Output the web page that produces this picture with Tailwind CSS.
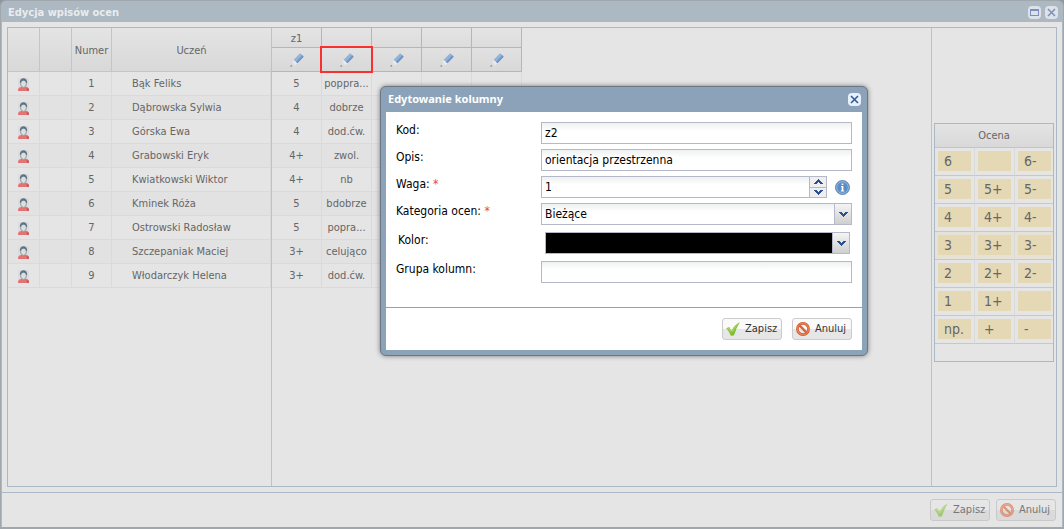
<!DOCTYPE html>
<html lang="pl">
<head>
    <meta charset="UTF-8">
    <meta name="viewport" content="width=device-width, initial-scale=1.0">
    <title>Edycja wpisów ocen</title>
    <script src="https://cdn.jsdelivr.net/npm/@tailwindcss/browser@4"></script>
    <style>
        body {
            font-family: 'DejaVu Sans Condensed', 'Noto Sans', sans-serif;
        }
        .title {
            font-family: 'Noto Sans', sans-serif;
        }
    </style>
</head>
<body class="bg-[#8f979e] text-[11px] text-[#666]">

    <!-- Icons -->
    <svg class="hidden" xmlns="http://www.w3.org/2000/svg">
        <symbol id="i-person" viewBox="0 0 12 13">
            <rect width="11" height="13" fill="#dcdcdc"/>
            <path d="M0 13V11.2Q.6 9.6 3 9H8Q10.4 9.6 11 11.2V13Z" fill="#e27474"/>
            <path d="M8.4 9.2Q10.4 9.8 11 11.2V13H9.2Z" fill="#c25a62"/>
            <ellipse cx="5.5" cy="5.8" rx="2.9" ry="3.6" fill="#dedede" stroke="#8c8c8c" stroke-width=".8"/>
            <path d="M1.8 5Q1.8 0.2 5.5 0.2T9.2 5L8.2 4.8Q8 2.6 5.5 2.6T2.8 4.8Z" fill="#5b7488"/>
        </symbol>
        <symbol id="i-pencil" viewBox="0 0 14 14">
            <path d="M0.6 13.6L2 9.4L5 5.8L8.8 9.4L5 12.4Z" fill="#dedede"/>
            <path d="M2.6 8.6L5 5.8L8.8 9.4L5.4 12.2Z" fill="#ebebeb"/>
            <path d="M0.4 13.8L1 11.8L2.4 13.2Z" fill="#777"/>
            <path d="M3.6 6.8L9.6 .8Q10.2 .3 10.8 .8L13.2 3Q13.8 3.6 13.2 4.2L7.4 10.2Z" fill="#8fb3dc"/>
            <path d="M6 9L12.3 2.2L13.2 3Q13.8 3.6 13.2 4.2L7.4 10.2Z" fill="#7393c2"/>
        </symbol>
        <symbol id="i-check" viewBox="0 0 14 14">
            <path d="M0.3 6.2L3.2 5.3L5.4 9Q8 3.6 13.8 0.3Q10.6 5 8.2 13Q7 14 4.6 13.4Q3.2 9.4 0.3 6.2Z" fill="#83bb3a"/>
            <path d="M0.3 6.2L3.2 5.3L5.4 9Q8 3.6 13.8 0.3Q10 4.6 7.4 9.6Q5.5 11 4 9.6Q2.4 7.6 0.3 6.2Z" fill="#a2d05c"/>
        </symbol>
        <symbol id="i-ban" viewBox="0 0 14 14">
            <circle cx="7" cy="7" r="5.6" fill="none" stroke="#c9522c" stroke-width="2.6"/>
            <circle cx="7" cy="7" r="5.6" fill="none" stroke="#ea7f52" stroke-width="1.6"/>
            <path d="M3.2 3.2L10.8 10.8" stroke="#d9653b" stroke-width="2.4"/>
        </symbol>
        <symbol id="i-down" viewBox="0 0 9 5">
            <path d="M0 0H3V1H4V2H5V1H6V0H9V1H8V2H7V3H6V4H5V5H4V4H3V3H2V2H1V1H0Z" fill="#2c4f90"/>
        </symbol>
        <symbol id="i-up" viewBox="0 0 9 5">
            <path d="M4 0H5V1H6V2H7V3H8V4H9V5H6V4H5V3H4V4H3V5H0V4H1V3H2V2H3V1H4Z" fill="#2c4f90"/>
        </symbol>
        <symbol id="i-info" viewBox="0 0 14 14">
            <circle cx="7" cy="7" r="6.5" fill="#6c9bcb" stroke="#5580ad" stroke-width=".9"/>
            <circle cx="7" cy="7" r="5.4" fill="#5b8dc4" stroke="#a5c4e4" stroke-width=".7"/>
            <path d="M6.2 3.2H7.8V4.6H6.2ZM5.6 5.6H7.8V9.8H8.6V10.8H5.4V9.8H6.2V6.6H5.6Z" fill="#fff"/>
        </symbol>
        <symbol id="i-close" viewBox="0 0 9 9">
            <path d="M1 1L8 8M8 1L1 8" stroke="currentColor" stroke-width="1.5"/>
        </symbol>
        <symbol id="i-max" viewBox="0 0 9 7">
            <path d="M0 0H9V7H0ZM1 2V6H8V2Z" fill="currentColor" fill-rule="evenodd"/>
        </symbol>
    </svg>

    <!-- Main window -->
    <div class="flex h-screen flex-col rounded-t-md border border-[#a0a7ad] border-b-2 bg-[#acb8c2] px-px">
        <header class="flex h-[21px] shrink-0 items-center justify-between pl-1.5 pr-1">
            <h1 class="mt-1 font-bold text-[#e9ecee]">Edycja wpisów ocen</h1>
            <div class="mt-0.5 flex gap-1">
                <button type="button" aria-label="Maksymalizuj" class="flex size-[13px] items-center justify-center rounded-sm bg-[#dce2e8] text-[#7d8fbe]"><svg class="h-[7px] w-[9px]"><use href="#i-max"/></svg></button>
                <button type="button" aria-label="Zamknij" class="flex size-[13px] items-center justify-center rounded-sm bg-[#dce2e8] text-[#7d8fb4]"><svg class="size-[9px]"><use href="#i-close"/></svg></button>
            </div>
        </header>

        <main class="flex min-h-0 flex-1 bg-[#e5e5e5] p-[5px]">
            <div class="flex flex-1 border border-[#abb9c6]">

                <!-- Students -->
                <table class="w-[263px] shrink-0 table-fixed border-separate border-spacing-0 self-start">
                    <colgroup><col class="w-8"><col class="w-8"><col class="w-10"><col></colgroup>
                    <thead>
                        <tr class="h-11 bg-linear-to-b from-[#e4e4e4] to-[#d8d8d8] *:border-b *:border-[#c2c6ca] *:pt-[3px] *:font-normal">
                            <th class="border-r border-r-[#abb9c6]"></th>
                            <th class="border-r border-r-[#abb9c6]"></th>
                            <th class="border-r border-r-[#abb9c6]">Numer</th>
                            <th>Uczeń</th>
                        </tr>
                    </thead>
                    <tbody id="students"></tbody>
                </table>

                <!-- Grades -->
                <div class="flex-1 border-l border-[#b3c3d8]">
                    <table class="w-[250px] table-fixed border-separate border-spacing-0">
                        <thead>
                            <tr class="h-5 bg-linear-to-b from-[#e4e4e4] to-[#dcdcdc] *:border-r *:border-b *:border-[#abb9c6] *:pt-[3px] *:leading-4 *:font-normal">
                                <th>z1</th><th></th><th></th><th></th><th></th>
                            </tr>
                            <tr id="tools" class="h-6 bg-linear-to-b from-[#e1e1e1] to-[#d8d8d8] *:border-r *:border-b *:border-[#abb9c6] *:p-0"></tr>
                        </thead>
                        <tbody id="grades"></tbody>
                    </table>
                </div>

                <!-- Grade palette -->
                <aside class="flex w-[125px] shrink-0 items-center border-l border-[#b3c3d8] px-0.5 pb-[30px]">
                    <div class="h-[239px] w-full border border-[#abb9c6]">
                        <table class="w-full table-fixed border-separate border-spacing-0">
                            <colgroup><col class="w-10"><col class="w-10"><col></colgroup>
                            <thead>
                                <tr class="h-6 bg-linear-to-b from-[#e4e4e4] to-[#d8d8d8]">
                                    <th colspan="3" class="border-b border-[#c4c4c8] pt-0.5 font-normal">Ocena</th>
                                </tr>
                            </thead>
                            <tbody id="palette" class="text-sm"></tbody>
                        </table>
                    </div>
                </aside>
            </div>
        </main>

        <footer class="flex h-[35px] shrink-0 items-center justify-end gap-1.5 border-t border-[#abb9c6] bg-[#e5e5e5] pr-1.5">
            <button type="button" class="flex h-[22px] w-[60px] items-center gap-[5px] rounded-[3px] border border-[#c9c9c9] bg-linear-to-b from-[#e6e6e6] from-50% to-[#dadada] to-50% pl-[3px] text-[#777]"><svg class="size-3.5 opacity-60"><use href="#i-check"/></svg>Zapisz</button>
            <button type="button" class="flex h-[22px] w-[60px] items-center gap-[5px] rounded-[3px] border border-[#c9c9c9] bg-linear-to-b from-[#e6e6e6] from-50% to-[#dadada] to-50% pl-[3px] text-[#777]"><svg class="size-3.5 opacity-60"><use href="#i-ban"/></svg>Anuluj</button>
        </footer>
    </div>

    <!-- Column dialog -->
    <div role="dialog" aria-labelledby="dialogTitle" class="absolute left-[380px] top-[86px] w-[488px] rounded-md border border-[#6b7883] bg-[#8ba2b8] px-[5px] pb-[5px] text-[#222] shadow-[0_0_5px_#777]">
        <div class="flex h-[25px] items-center justify-between pl-0.5 pr-px">
            <h2 id="dialogTitle" class="title font-bold text-white">Edytowanie kolumny</h2>
            <button type="button" aria-label="Zamknij" class="flex size-[13px] items-center justify-center rounded-sm bg-[#e8f0fb] text-[#2f5597]"><svg class="size-[9px]"><use href="#i-close"/></svg></button>
        </div>
        <form class="bg-white text-xs text-black">
            <div class="flex flex-col gap-[5px] border-b border-[#8ba2b8] px-2.5 pb-6 pt-2.5">
                <div class="flex">
                    <label for="kod" class="w-[145px]">Kod:</label>
                    <input id="kod" type="text" value="z2" class="h-[22px] min-w-0 flex-1 border border-[#b5b8c8] bg-linear-to-b from-[#eef1f1] to-white to-40% px-[3px]">
                </div>
                <div class="flex">
                    <label for="opis" class="w-[145px]">Opis:</label>
                    <input id="opis" type="text" value="orientacja przestrzenna" class="h-[22px] min-w-0 flex-1 border border-[#b5b8c8] bg-linear-to-b from-[#eef1f1] to-white to-40% px-[3px]">
                </div>
                <div class="flex">
                    <label for="waga" class="w-[145px]">Waga: <span class="text-[#e44]">*</span></label>
                    <div class="flex h-[22px] flex-1 border border-[#b5b8c8]">
                        <input id="waga" type="text" inputmode="numeric" value="1" class="min-w-0 flex-1 bg-linear-to-b from-[#eef1f1] to-white to-40% px-[3px]">
                        <div class="flex w-[17px] flex-col border-l border-[#b5b8c8] bg-[#efefef]">
                            <button type="button" aria-label="Zwiększ" class="flex flex-1 items-center justify-center border-b border-[#b5b8c8]"><svg class="h-[5px] w-[9px]"><use href="#i-up"/></svg></button>
                            <button type="button" aria-label="Zmniejsz" class="flex flex-1 items-center justify-center"><svg class="h-[5px] w-[9px]"><use href="#i-down"/></svg></button>
                        </div>
                    </div>
                    <svg class="ml-2 mr-0.5 size-[15px] self-center"><use href="#i-info"/></svg>
                </div>
                <div class="flex">
                    <label for="kategoria" class="w-[145px]">Kategoria ocen: <span class="text-[#e44]">*</span></label>
                    <div class="grid h-[22px] flex-1 grid-cols-[1fr_17px] border border-[#b5b8c8]">
                        <select id="kategoria" class="col-span-2 col-start-1 row-start-1 appearance-none bg-linear-to-b from-[#eef1f1] to-white to-40% px-[3px]"><option>Bieżące</option></select>
                        <span class="pointer-events-none col-start-2 row-start-1 flex items-center justify-center border-l border-[#b5b8c8] bg-linear-to-b from-[#f4f4f4] to-[#cfcfcf]"><svg class="h-[5px] w-[9px]"><use href="#i-down"/></svg></span>
                    </div>
                </div>
                <div class="flex p-0.5">
                    <label for="kolor" class="w-[147px]">Kolor:</label>
                    <div class="grid h-[22px] flex-1 grid-cols-[1fr_17px] border border-[#b5b8c8]">
                        <select id="kolor" class="col-span-2 col-start-1 row-start-1 appearance-none bg-black"><option value="#000000"></option></select>
                        <span class="pointer-events-none col-start-2 row-start-1 flex items-center justify-center border-l border-[#b5b8c8] bg-linear-to-b from-[#f4f4f4] to-[#cfcfcf]"><svg class="h-[5px] w-[9px]"><use href="#i-down"/></svg></span>
                    </div>
                </div>
                <div class="flex">
                    <label for="grupa" class="w-[145px]">Grupa kolumn:</label>
                    <input id="grupa" type="text" class="h-[22px] min-w-0 flex-1 border border-[#b5b8c8] bg-linear-to-b from-[#eef1f1] to-white to-40% px-[3px]">
                </div>
            </div>
            <div class="flex h-[42px] items-center justify-end gap-2.5 pr-2.5 text-[11px] text-[#333]">
                <button type="submit" class="flex h-[22px] w-[60px] items-center gap-[5px] rounded-[3px] border border-[#ccc] bg-linear-to-b from-[#fafafa] from-50% to-[#e6e6e6] to-50% pl-[3px]"><svg class="size-3.5"><use href="#i-check"/></svg>Zapisz</button>
                <button type="button" class="flex h-[22px] w-[60px] items-center gap-[5px] rounded-[3px] border border-[#ccc] bg-linear-to-b from-[#fafafa] from-50% to-[#e6e6e6] to-50% pl-[3px]"><svg class="size-3.5"><use href="#i-ban"/></svg>Anuluj</button>
            </div>
        </form>
    </div>

    <script>
        const students = [
            ['Bąk Feliks', '5', 'poppra...'],
            ['Dąbrowska Sylwia', '4', 'dobrze'],
            ['Górska Ewa', '4', 'dod.ćw.'],
            ['Grabowski Eryk', '4+', 'zwol.'],
            ['Kwiatkowski Wiktor', '4+', 'nb'],
            ['Kminek Róża', '5', 'bdobrze'],
            ['Ostrowski Radosław', '5', 'popra...'],
            ['Szczepaniak Maciej', '3+', 'celująco'],
            ['Włodarczyk Helena', '3+', 'dod.ćw.'],
        ];
        const palette = [
            ['6', '', '6-'],
            ['5', '5+', '5-'],
            ['4', '4+', '4-'],
            ['3', '3+', '3-'],
            ['2', '2+', '2-'],
            ['1', '1+', ''],
            ['np.', '+', '-'],
        ];
        const row = 'h-6 even:bg-[#e2e2e2] *:border-r *:border-b *:border-[#dadada] *:pt-0.5';

        document.getElementById('students').innerHTML = students.map(([name], i) => `
            <tr class="${row}">
                <td><svg class="mx-auto h-[13px] w-3"><use href="#i-person"/></svg></td>
                <td></td>
                <td class="text-center">${i + 1}</td>
                <td><div class="pl-5">${name}</div></td>
            </tr>`).join('');

        document.getElementById('grades').innerHTML = students.map(([, z1, z2]) => `
            <tr class="${row} text-center">
                <td>${z1}</td><td>${z2}</td><td></td><td></td><td></td>
            </tr>`).join('');

        // The second column is the one being edited
        document.getElementById('tools').innerHTML = [0, 1, 2, 3, 4].map(i => `
            <th><button type="button" aria-label="Edytuj kolumnę" class="flex h-[23px] w-full items-center justify-center ${i === 1 ? 'outline-2 outline-[#f83030]' : ''}"><svg class="size-3.5"><use href="#i-pencil"/></svg></button></th>`).join('');

        document.getElementById('palette').innerHTML = palette.map((cells, i) => `
            <tr class="h-7 ${i === 3 ? 'bg-[#e6e3d6]' : ''}">
                ${cells.map(c => `<td class="border-r border-b border-r-[#dadada] border-b-[#c8c8cc] p-0 last:border-r-0"><button type="button" aria-label="${c || 'brak'}" class="ml-[3px] block h-5 w-[33px] bg-[#e5d8b5] pl-1.5 text-left">${c}</button></td>`).join('')}
            </tr>`).join('');
    </script>
</body>
</html>
